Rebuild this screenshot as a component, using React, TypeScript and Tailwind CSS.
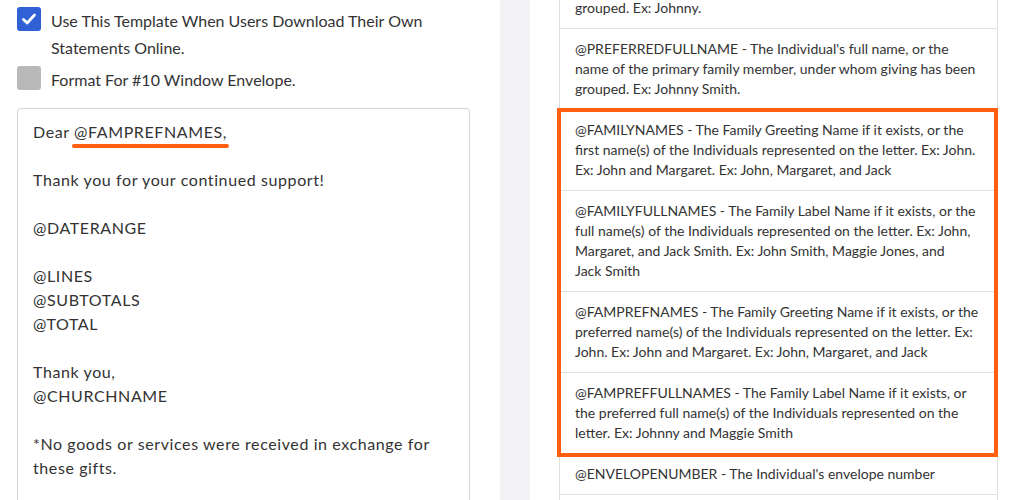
const font = { fontFamily: "Lato, 'Liberation Sans', sans-serif" };

const variables = [
  "@PREFERREDNAME - The Individual's preferred name, or the name of the primary family member, under whom giving has been grouped. Ex: Johnny.",
  "@PREFERREDFULLNAME - The Individual's full name, or the name of the primary family member, under whom giving has been grouped. Ex: Johnny Smith.",
];

const highlighted = [
  "@FAMILYNAMES - The Family Greeting Name if it exists, or the first name(s) of the Individuals represented on the letter. Ex: John. Ex: John and Margaret. Ex: John, Margaret, and Jack",
  "@FAMILYFULLNAMES - The Family Label Name if it exists, or the full name(s) of the Individuals represented on the letter. Ex: John, Margaret, and Jack Smith. Ex: John Smith, Maggie Jones, and Jack\u00a0Smith",
  "@FAMPREFNAMES - The Family Greeting Name if it exists, or the preferred name(s) of the Individuals represented on the letter. Ex: John. Ex: John and Margaret. Ex: John, Margaret, and Jack",
  "@FAMPREFFULLNAMES - The Family Label Name if it exists, or the preferred full name(s) of the Individuals represented on the letter. Ex: Johnny and Maggie Smith",
];

const after = [
  "@ENVELOPENUMBER - The Individual's envelope number",
  "@CHURCHNAME - The name of your church",
];

function Row({ text }: { text: string }) {
  return (
    <div className="border-b border-[#e1e1e1] px-[15px] py-[10px] text-[14px] leading-[20px] text-[#333]">
      {text}
    </div>
  );
}

function Checkbox({ checked }: { checked: boolean }) {
  if (checked) {
    return (
      <span className="flex h-[24px] w-[24px] shrink-0 items-center justify-center rounded-[3px] bg-[#2f61d4]">
        <svg width="16" height="16" viewBox="0 0 16 16">
          <polyline
            points="2.5,8.5 6.2,12 13.5,4"
            fill="none"
            stroke="white"
            strokeWidth="2.8"
            strokeLinecap="round"
            strokeLinejoin="round"
          />
        </svg>
      </span>
    );
  }
  return <span className="h-[24px] w-[24px] shrink-0 rounded-[3px] bg-[#b9b9b9]" />;
}

export default function App() {
  return (
    <div className="flex h-[500px] w-[1014px] overflow-hidden bg-white" style={font}>
      {/* left: template editor */}
      <div className="w-[500px] shrink-0 pl-[17px] pr-[30px] pt-[7px]">
        <div className="flex flex-col gap-[5px]">
          <label className="flex items-start gap-[10px] text-[16px] leading-[27px] text-[#333]">
            <Checkbox checked />
            <span>Use This Template When Users Download Their Own Statements Online.</span>
          </label>
          <label className="flex items-start gap-[10px] text-[16px] leading-[27px] text-[#333]">
            <Checkbox checked={false} />
            <span>Format For #10 Window Envelope.</span>
          </label>
        </div>

        <div className="mt-[15px] h-[420px] w-[453px] rounded-[4px] border border-[#d5d5d5] px-[15px] pt-[11px] text-[16px] leading-[24px] tracking-[0.6px] text-[#333]">
          <p>
            Dear{" "}
            <span className="relative inline-block">
              @FAMPREFNAMES,
              <span className="absolute left-[-2px] right-[-2px] top-[24px] h-[4px] rounded-full bg-[#ff5f0f]" />
            </span>
          </p>
          <p className="h-[24px]" />
          <p>Thank you for your continued support!</p>
          <p className="h-[24px]" />
          <p>@DATERANGE</p>
          <p className="h-[24px]" />
          <p>@LINES</p>
          <p>@SUBTOTALS</p>
          <p>@TOTAL</p>
          <p className="h-[24px]" />
          <p>Thank you,</p>
          <p>@CHURCHNAME</p>
          <p className="h-[24px]" />
          <p>*No goods or services were received in exchange for these gifts.</p>
        </div>
      </div>

      <div className="w-[30px] shrink-0 bg-[#f3f3f6]" />

      {/* right: variable reference list */}
      <div className="flex-1 pl-[29px] pr-[16px]">
        <div className="mt-[-53px] border border-[#e1e1e1] border-b-0">
          {variables.map((v) => (
            <Row key={v} text={v} />
          ))}
          <div className="relative">
            {highlighted.map((v) => (
              <Row key={v} text={v} />
            ))}
            <div className="absolute -top-[2px] -bottom-[3px] -left-[3px] -right-[1px] border-[4px] border-[#ff5f0f]" />
          </div>
          {after.map((v) => (
            <Row key={v} text={v} />
          ))}
        </div>
      </div>
    </div>
  );
}
